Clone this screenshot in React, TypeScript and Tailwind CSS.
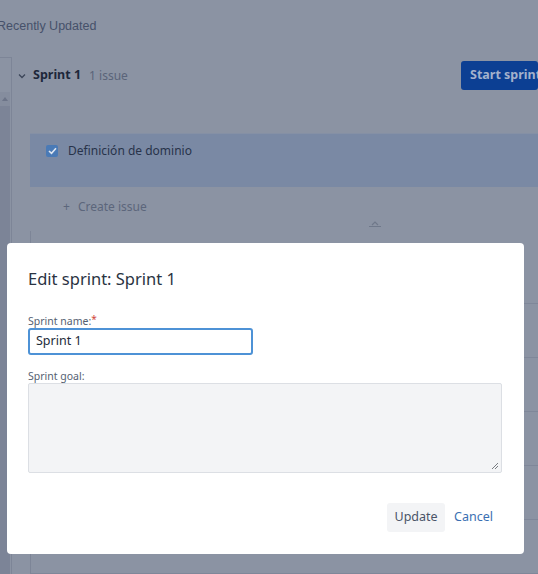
import React from "react";

function Chevron() {
  return (
    <svg width="8" height="6" viewBox="0 0 8 6" className="block">
      <path d="M1 1.5 L4 4.5 L7 1.5" fill="none" stroke="#3c4659" strokeWidth="1.3" />
    </svg>
  );
}

export default function App() {
  const rows = [0, 1, 2, 3, 4];
  return (
    <div
      className="relative w-[538px] h-[574px] overflow-hidden bg-[#8b93a3]"
      style={{ fontFamily: '"Noto Sans", "Open Sans", sans-serif' }}
    >
      {/* underlying page (seen through overlay) */}
      <div className="flex flex-col h-full">
        <div className="h-[57px] flex items-start pt-[17px]">
          <span
            className="ml-[-3px] text-[12.5px] text-[#46516a] leading-[18px] whitespace-nowrap"
            style={{ fontFamily: '"Liberation Sans", Arial, sans-serif' }}
          >
            Recently Updated
          </span>
        </div>
        <div className="flex flex-1 min-h-0">
          {/* left panel edge with scrollbar */}
          <div className="w-[12px] border-t border-r border-[#7d8597] flex flex-col">
            <div className="h-[34px]" />
            <div className="w-[10px] h-[14px] bg-[#858d9e] flex items-center justify-center">
              <svg width="6" height="4" viewBox="0 0 6 4">
                <path d="M0 4 L3 0 L6 4 Z" fill="#6c7488" />
              </svg>
            </div>
            <div className="w-[10px] flex-1 bg-[#7c8497]" />
          </div>
          {/* main content */}
          <div className="flex-1 flex flex-col">
            <div className="h-[32px] mt-[3px] flex items-center pl-[6px]">
              <Chevron />
              <span className="ml-[7px] text-[12.5px] font-bold text-[#1d273a]">Sprint 1</span>
              <span className="ml-[8px] text-[12px] text-[#5a6479]">1 issue</span>
              <div className="ml-auto h-[29px] w-[77px] rounded-[3px] bg-[#0c3f93] flex items-center pl-[9px] overflow-hidden">
                <span className="text-[12.5px] font-bold text-[#a3b1cc] whitespace-nowrap">Start sprint</span>
              </div>
            </div>
            <div className="h-[42px]" />
            <div className="ml-[18px] h-[55px] bg-[#7a89a4] border-t border-[#8590a5] flex items-start pl-[16px] pt-[10px]">
              <div className="w-[12px] h-[12px] mt-[1px] rounded-[2px] bg-[#4a7ab6] flex items-center justify-center">
                <svg width="9" height="8" viewBox="0 0 9 8">
                  <path d="M1 4 L3.5 6.3 L8 1.3" fill="none" stroke="#dfe6f1" strokeWidth="1.6" />
                </svg>
              </div>
              <span className="ml-[10px] text-[12px] leading-[14px] text-[#28334a]">Definición de dominio</span>
            </div>
            <div className="ml-[51px] mt-[12px] h-[16px] flex items-center text-[12px] text-[#5c667b]">
              <span className="mr-[8px]">+</span>
              <span>Create issue</span>
            </div>
            <div className="h-[16px] ml-[18px] pl-[339px]">
              <div className="mt-[5px] w-[12px] flex flex-col items-center">
                <svg width="10" height="6" viewBox="0 0 10 6">
                  <path d="M2 5 L5 2 L8 5" fill="none" stroke="#6f788a" strokeWidth="1.2" />
                </svg>
                <div className="w-[12px] h-[1px] bg-[#6f788a]" />
              </div>
            </div>
            <div className="ml-[18px] flex-1 border-l border-[#7d8597]">
              <div className="h-[73px] border-b border-[#7f8799]" />
              {rows.map((r) => (
                <div key={r} className="h-[54px] border-b border-[#7f8799]" />
              ))}
            </div>
          </div>
        </div>
      </div>

      {/* modal */}
      <div className="absolute left-[7px] top-[243px] w-[517px] h-[311px] bg-white rounded-[4px] flex flex-col pl-[21px] pr-[22px] pt-[23px]">
        <h2 className="text-[16.5px] leading-[26px] text-[#2a3342] font-normal">Edit sprint: Sprint 1</h2>
        <label className="mt-[22px] text-[10.5px] leading-[14px] text-[#555f72]">
          Sprint name:<span className="text-[#d0453b] align-top text-[10px] leading-[10px]">*</span>
        </label>
        <div className="w-[225px] h-[27px] rounded-[3px] border-2 border-[#4d92d6] flex items-center pl-[6px]">
          <span className="text-[12.5px] text-[#222b3a]">Sprint 1</span>
        </div>
        <label className="mt-[14px] text-[10.5px] leading-[14px] text-[#555f72]">Sprint goal:</label>
        <div className="relative w-[474px] h-[90px] rounded-[2px] border border-[#dcdfe4] bg-[#f3f4f6]">
          <svg width="8" height="8" viewBox="0 0 8 8" className="absolute right-[2px] bottom-[2px]">
            <path d="M1 7 L7 1 M4 7 L7 4" stroke="#6b6f76" strokeWidth="0.9" />
          </svg>
        </div>
        <div className="mt-[30px] flex items-center justify-end pr-[9px]">
          <div className="h-[29px] w-[58px] rounded-[3px] bg-[#f3f4f6] flex items-center justify-center">
            <span className="text-[12.5px] text-[#4a5468]">Update</span>
          </div>
          <span className="ml-[9px] text-[12.5px] text-[#3a6fb2]">Cancel</span>
        </div>
      </div>
    </div>
  );
}
